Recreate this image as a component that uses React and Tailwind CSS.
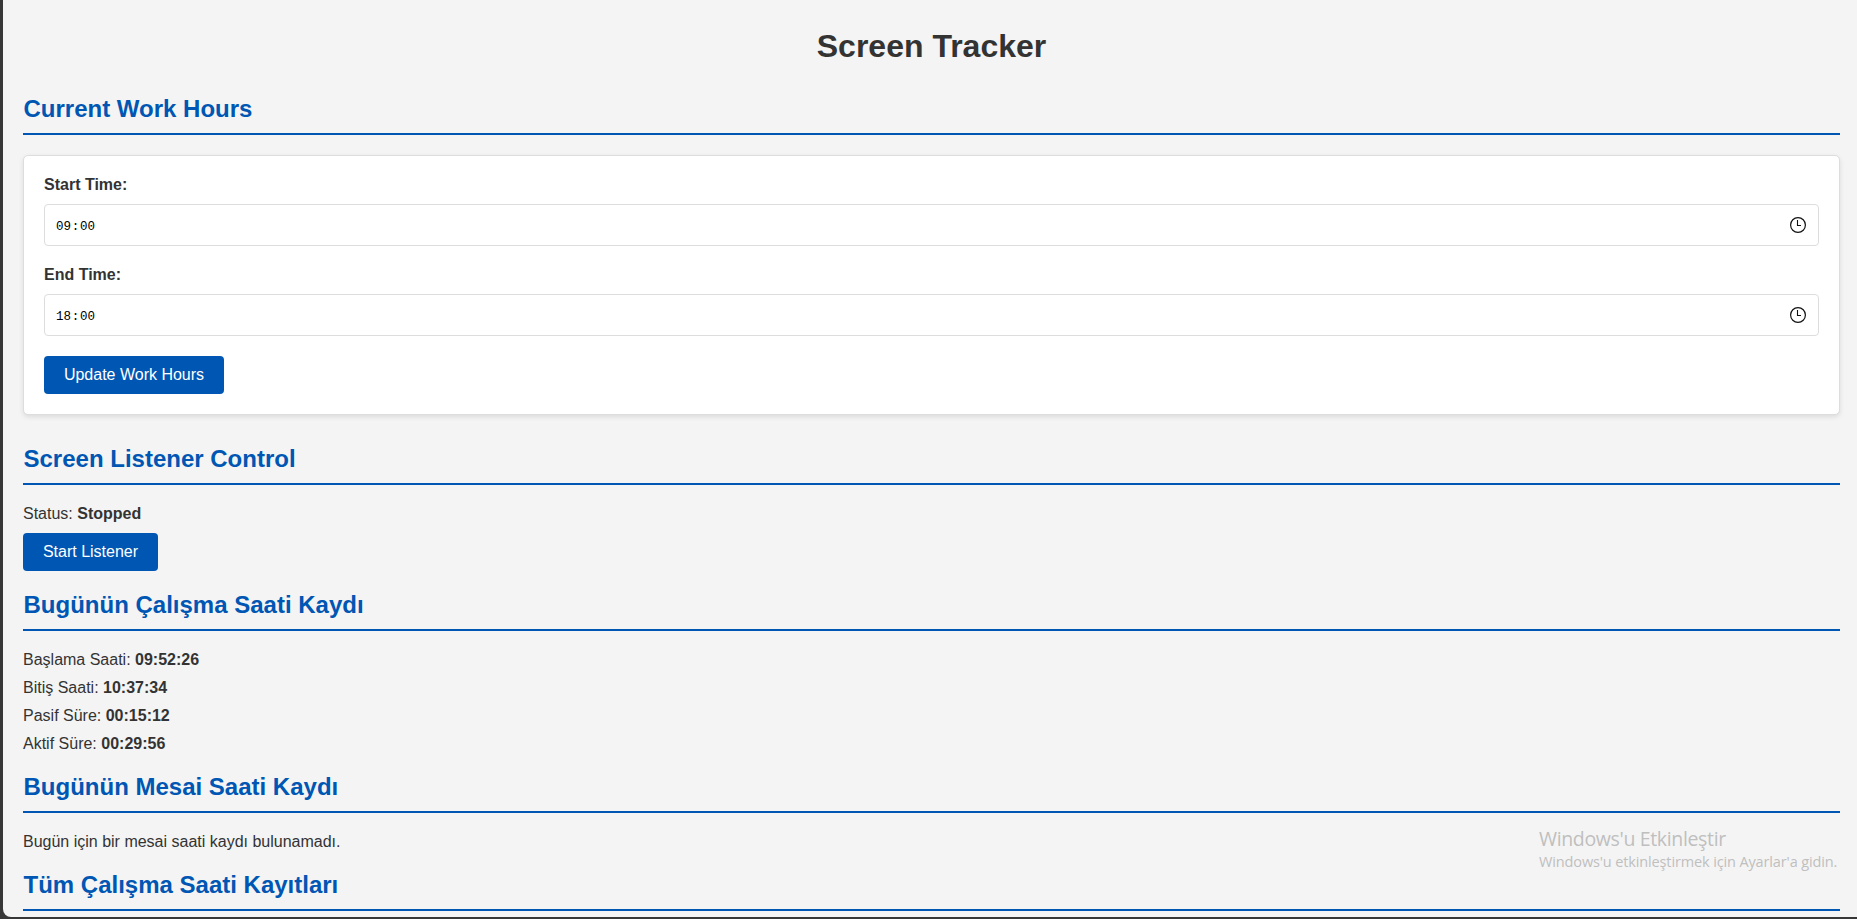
function Heading({ children, className = "" }) {
  return (
    <h2 className={`h-[45px] shrink-0 border-b-2 border-[#0056b3] pl-[0.5px] text-2xl leading-[38px] font-bold whitespace-nowrap text-[#0056b3] ${className}`}>
      {children}
    </h2>
  );
}

function ClockIcon() {
  return (
    <svg className="size-4" viewBox="0 0 16 16" fill="none" stroke="#111" aria-hidden="true">
      <circle cx="8" cy="8" r="7.4" strokeWidth="1.2" />
      <path d="M7.5 3v5.5H11" strokeWidth="1.1" />
    </svg>
  );
}

function TimeField({ label, hour, minute, className = "" }) {
  return (
    <div className={`flex flex-col ${className}`}>
      <div className="h-7 leading-[18px] font-bold">{label}</div>
      <div className="flex h-[42px] items-center justify-between rounded border border-[#ddd] bg-white pr-[12px] pl-[11px] text-black">
        <div className="flex pt-[4px] font-['Liberation_Mono',monospace] text-[12.5px]">
          <span>{hour}</span>
          <span className="w-[9px] text-center">:</span>
          <span>{minute}</span>
        </div>
        <ClockIcon />
      </div>
    </div>
  );
}

function Button({ children, className = "" }) {
  return (
    <button className={`h-[38px] shrink-0 rounded bg-[#0056b3] text-base leading-[36px] whitespace-nowrap text-white ${className}`}>
      {children}
    </button>
  );
}

const records = [
  ["Başlama Saati:", "09:52:26"],
  ["Bitiş Saati:", "10:37:34"],
  ["Pasif Süre:", "00:15:12"],
  ["Aktif Süre:", "00:29:56"],
];

export default function App() {
  return (
    <div className="relative h-[919px] w-[1857px] overflow-hidden bg-[#373737] pb-[2px] pl-[3px] font-['Liberation_Sans',Arial,sans-serif] text-base text-[#333]">
      <main className="flex h-full flex-col overflow-hidden rounded-bl-lg bg-[#f4f4f4] pt-5 pr-[17px] pl-5">
        <h1 className="h-[70px] shrink-0 text-center text-[32px] leading-[53px] font-bold">Screen Tracker</h1>

        <Heading>Current Work Hours</Heading>
        <section className="mt-5 flex h-[260px] shrink-0 flex-col items-stretch rounded-[5px] border border-[#ddd] bg-white px-5 shadow-[0_2px_5px_rgba(0,0,0,0.1)]">
          <TimeField label="Start Time:" hour="09" minute="00" className="mt-5" />
          <TimeField label="End Time:" hour="18" minute="00" className="mt-5" />
          <Button className="mt-5 w-[180px]">Update Work Hours</Button>
        </section>

        <Heading className="mt-[25px]">Screen Listener Control</Heading>
        <p className="mt-[15px] h-[33px] shrink-0 leading-[28px]">
          Status: <strong>Stopped</strong>
        </p>
        <Button className="w-[135px]">Start Listener</Button>

        <Heading className="mt-[15px]">Bugünün Çalışma Saati Kaydı</Heading>
        <div className="mt-[15px] shrink-0">
          {records.map(([label, value]) => (
            <p key={label} className="h-7 leading-[28px]">
              {label} <strong>{value}</strong>
            </p>
          ))}
        </div>

        <Heading className="mt-[10px]">Bugünün Mesai Saati Kaydı</Heading>
        <p className="mt-[15px] h-7 shrink-0 leading-[28px]">Bugün için bir mesai saati kaydı bulunamadı.</p>

        <Heading className="mt-[10px]">Tüm Çalışma Saati Kayıtları</Heading>
      </main>

      <div className="absolute top-[825px] left-[1539px] font-['Open_Sans','Noto_Sans',sans-serif] whitespace-nowrap text-[#bfbfbf]">
        <div className="h-[25px] text-[19.5px] leading-[28px] tracking-[-0.35px]">Windows'u Etkinleştir</div>
        <div className="text-[14.5px] leading-[24px] tracking-[-0.13px]">Windows'u etkinleştirmek için Ayarlar'a gidin.</div>
      </div>
    </div>
  );
}
